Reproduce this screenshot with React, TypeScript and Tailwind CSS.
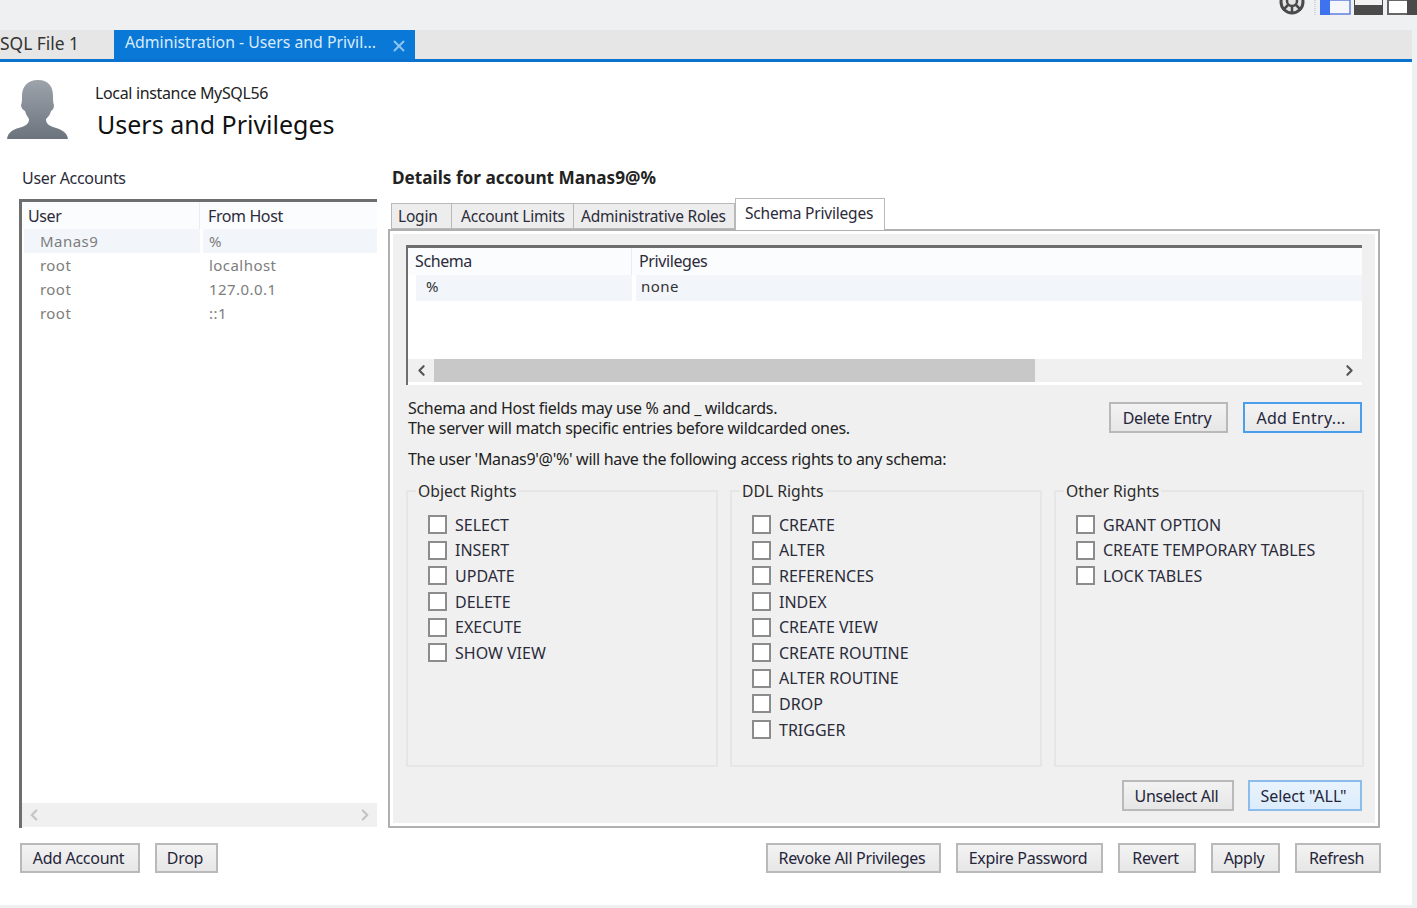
import { ChevronLeft, ChevronRight, X } from "lucide-react"

const objectRights = ["SELECT", "INSERT", "UPDATE", "DELETE", "EXECUTE", "SHOW VIEW"]
const ddlRights = ["CREATE", "ALTER", "REFERENCES", "INDEX", "CREATE VIEW", "CREATE ROUTINE", "ALTER ROUTINE", "DROP", "TRIGGER"]
const otherRights = ["GRANT OPTION", "CREATE TEMPORARY TABLES", "LOCK TABLES"]
const accounts = [
  ["Manas9", "%"],
  ["root", "localhost"],
  ["root", "127.0.0.1"],
  ["root", "::1"],
]

const btnTones = {
  plain: "border-[#b9b9b9] from-[#f3f3f3] to-[#e6e6e6] tracking-[-0.3px]",
  focus: "border-[#4a9fec] from-[#f3f3f3] to-[#e9e9e9] tracking-[0.3px]",
  hover: "border-[#8cbcec] from-[#e8f3fd] to-[#dcecfb]",
}

function Btn({ label, className = "", tone = "plain" }: { label: string; className?: string; tone?: keyof typeof btnTones }) {
  return (
    <button className={`shrink-0 border-2 bg-gradient-to-b pr-[3px] text-[16px] text-[#25253a] ${btnTones[tone]} ${className}`}>
      {label}
    </button>
  )
}

function RightsGroup({ title, items }: { title: string; items: string[] }) {
  return (
    <fieldset className="h-[286px] border-2 border-[#e6e6e6] pl-[20px]">
      <legend className="-ml-[12px] h-[20px] px-[2px] text-[15.7px] leading-[20px] text-[#2b2b2b]">{title}</legend>
      <div className="pt-[11px]">
        {items.map((item) => (
          <label key={item} className="flex h-[25.6px] items-center gap-[8px] text-[16px] text-[#2b2b3a]">
            <span className="h-[19px] w-[19px] shrink-0 border-2 border-[#8c8c8c] bg-white" />
            {item}
          </label>
        ))}
      </div>
    </fieldset>
  )
}

function TopIcons() {
  return (
    <svg width="140" height="16" viewBox="0 0 140 16" className="shrink-0">
      <circle cx="15" cy="2" r="11" fill="#e4e4e4" stroke="#4a4a4a" strokeWidth="3" />
      <circle cx="15" cy="1" r="5" fill="none" stroke="#4a4a4a" strokeWidth="2.5" />
      <path d="M6 10 L11 5 M24 10 L19 5 M15 7 V13" stroke="#4a4a4a" strokeWidth="2.5" />
      <path d="M38 0 V15" stroke="#b4bccb" strokeWidth="1" strokeDasharray="1 1" />
      <rect x="44" y="0" width="29" height="14" fill="#f4f6fb" stroke="#5f7fe0" strokeWidth="1.5" />
      <rect x="43" y="0" width="10" height="15" fill="#3f72ef" />
      <rect x="77" y="0" width="29" height="15" fill="#4a4a4a" />
      <rect x="78" y="0" width="27" height="5" fill="#f2f2f2" />
      <rect x="111" y="0" width="29" height="14" fill="#fff" stroke="#666" strokeWidth="2" />
      <rect x="130" y="0" width="10" height="15" fill="#4a4a4a" />
    </svg>
  )
}

function Avatar() {
  return (
    <svg width="62" height="62" viewBox="0 0 62 62" className="shrink-0">
      <defs>
        <linearGradient id="avatarFill" x1="0" y1="0" x2="0" y2="1">
          <stop offset="0" stopColor="#9da3ab" />
          <stop offset="1" stopColor="#6b737d" />
        </linearGradient>
      </defs>
      <path
        d="M31 1 C20 1 15 8 15 17 C15 21 15 24 14 26 C14 29 16 31 18 32 C19 36 21 38 22 40 C22 44 20 46 15 48 C8 50 1 52 0 60 L61 60 C60 52 52 50 46 48 C41 46 39 44 39 40 C41 38 43 36 44 32 C46 31 47 29 47 26 C46 24 46 21 46 17 C46 8 42 1 31 1 Z"
        fill="url(#avatarFill)"
      />
    </svg>
  )
}

export default function App() {
  return (
    <div className="flex h-[908px] w-[1417px] flex-col overflow-hidden bg-[#eff0f2] font-['Noto_Sans',sans-serif] text-[#222]">
      {/* Title strip */}
      <div className="flex h-[30px] shrink-0 justify-end">
        <TopIcons />
      </div>

      {/* Document tabs */}
      <div className="mr-[5px] flex h-[32px] shrink-0 border-b-[3px] border-[#0c72d0] bg-[#e6e6e6]">
        <div className="w-[114px] pt-[1px] text-[17.4px] leading-[24px] text-[#333]">SQL File 1</div>
        <div className="flex w-[301px] bg-[#0a78d7] pl-[11px] text-[15.8px] leading-[24px] text-[#d8ebfb]">
          <span className="w-[265px] whitespace-nowrap">Administration - Users and Privil...</span>
          <X size={18} strokeWidth={2.5} className="mt-[7px] text-[#8fc4ef]" />
        </div>
      </div>

      <div className="mb-[3px] mr-[5px] flex flex-1 flex-col bg-white">
        {/* Page header */}
        <div className="flex h-[105px] shrink-0 pl-[7px] pt-[17px]">
          <Avatar />
          <div className="ml-[26px] pt-[4px]">
            <div className="h-[20px] text-[16px] leading-[20px] tracking-[-0.35px] text-[#222]">Local instance MySQL56</div>
            <div className="ml-[2px] mt-[5px] text-[25px] leading-[32px] text-[#111]">Users and Privileges</div>
          </div>
        </div>

        <div className="grid shrink-0 grid-cols-[358px_992px] gap-x-[11px] pl-[19px]">
          <div className="h-[32px] pl-[3px] pt-[1px] text-[16px] leading-[20px] tracking-[-0.3px] text-[#2b2b3a]">User Accounts</div>
          <div className="h-[32px] pl-[4px] pt-[1px] text-[17.2px] font-bold leading-[20px] text-[#222]">Details for account Manas9@%</div>

          {/* Accounts list */}
          <div className="flex h-[629px] flex-col border-l-[3px] border-t-[3px] border-[#6e6e6e] bg-white">
            <div className="flex h-[27px] shrink-0 bg-[#fbfcfe] text-[16px] leading-[28px] tracking-[-0.4px] text-[#2b2b3a]">
              <div className="w-[178px] border-r border-[#e6edf5] pl-[6px]">User</div>
              <div className="pl-[8px]">From Host</div>
            </div>
            <div className="flex-1">
              {accounts.map(([user, host], i) => (
                <div key={host} className="ml-[2px] flex h-[24px] font-['DejaVu_Sans',sans-serif] text-[15px] leading-[24px] tracking-[0.45px] text-[#7d7d7d]">
                  <div className={`w-[176px] pl-[16px] ${i === 0 ? "bg-[#f2f6fb]" : ""}`}>{user}</div>
                  <div className={`ml-[3px] flex-1 pl-[6px] ${i === 0 ? "bg-[#f2f6fb]" : ""}`}>{host}</div>
                </div>
              ))}
            </div>
            <div className="mb-[1px] flex h-[24px] shrink-0 items-center justify-between bg-[#f0f0f0] px-[3px] text-[#c4c4c4]">
              <ChevronLeft size={18} strokeWidth={3} />
              <ChevronRight size={18} strokeWidth={3} />
            </div>
          </div>

          {/* Details */}
          <div className="flex h-[629px] flex-col">
            <div className="flex h-[30px] shrink-0 items-end pl-[3px] text-[15.5px] tracking-[-0.2px] text-[#2b2b3a]">
              <div className="h-[26px] w-[61px] border border-[#b9b9b9] bg-[#ededed] pl-[6px] leading-[25px]">Login</div>
              <div className="h-[26px] w-[122px] border border-l-0 border-[#b9b9b9] bg-[#ededed] pl-[9px] leading-[25px]">Account Limits</div>
              <div className="h-[26px] w-[161px] whitespace-nowrap border border-l-0 border-[#b9b9b9] bg-[#ededed] pl-[7px] leading-[25px]">Administrative Roles</div>
              <div className="relative z-10 -mb-[1px] h-[32px] w-[150px] border border-b-0 border-[#b9b9b9] bg-white pl-[9px] pt-[2px] leading-[24px]">Schema Privileges</div>
            </div>

            <div className="flex flex-1 flex-col border-2 border-[#b0b0b0] bg-[#f0f0f0] outline outline-[3px] -outline-offset-[5px] outline-white">
              <div className="mx-[16px] mt-[14px] flex h-[140px] shrink-0 flex-col border-l-2 border-t-[3px] border-[#6e6e6e] bg-white">
                <div className="flex h-[27px] shrink-0 bg-[#fbfcfe] text-[16px] leading-[26px] tracking-[-0.4px] text-[#2b2b3a]">
                  <div className="w-[224px] border-r border-[#e6edf5] pl-[7px]">Schema</div>
                  <div className="pl-[7px]">Privileges</div>
                </div>
                <div className="flex h-[26px] shrink-0 font-['DejaVu_Sans',sans-serif] text-[15px] leading-[23px] tracking-[0.45px] text-[#333]">
                  <div className="ml-[8px] w-[216px] bg-[#f2f6fb] pl-[10px]">%</div>
                  <div className="ml-[4px] flex-1 bg-[#f2f6fb] pl-[5px]">none</div>
                </div>
                <div className="flex-1" />
                <div className="mb-[3px] flex h-[23px] shrink-0 items-center bg-[#f0f0f0] text-[#555]">
                  <div className="flex w-[26px] justify-center">
                    <ChevronLeft size={17} strokeWidth={3} />
                  </div>
                  <div className="h-full w-[601px] bg-[#c8c8c8]" />
                  <div className="flex flex-1 justify-end pr-[4px]">
                    <ChevronRight size={17} strokeWidth={3} />
                  </div>
                </div>
              </div>

              <div className="mx-[18px] mt-[13px] flex h-[44px] shrink-0 justify-between">
                <div className="text-[16px] leading-[20px] tracking-[-0.3px] text-[#222]">
                  <div>Schema and Host fields may use % and _ wildcards.</div>
                  <div>The server will match specific entries before wildcarded ones.</div>
                </div>
                <div className="-mr-[2px] mt-[4px] flex h-[31px] gap-[15px]">
                  <Btn label="Delete Entry" className="w-[119px]" />
                  <Btn label="Add Entry..." tone="focus" className="w-[119px]" />
                </div>
              </div>

              <div className="ml-[18px] mt-[7px] h-[20px] shrink-0 text-[16px] leading-[20px] tracking-[-0.3px] text-[#222]">
                The user 'Manas9'@'%' will have the following access rights to any schema:
              </div>

              <div className="mx-[16px] mt-[12px] grid shrink-0 grid-cols-[312px_312px_310px] gap-x-[12px]">
                <RightsGroup title="Object Rights" items={objectRights} />
                <RightsGroup title="DDL Rights" items={ddlRights} />
                <RightsGroup title="Other Rights" items={otherRights} />
              </div>

              <div className="mr-[16px] mt-[13px] flex h-[31px] justify-end gap-[14px]">
                <Btn label="Unselect All" className="w-[112px]" />
                <Btn label='Select "ALL"' tone="hover" className="w-[114px]" />
              </div>
            </div>
          </div>
        </div>

        {/* Bottom actions */}
        <div className="mt-[15px] flex h-[30px] shrink-0 pl-[20px]">
          <Btn label="Add Account" className="w-[120px]" />
          <Btn label="Drop" className="ml-[15px] w-[63px]" />
          <div className="ml-[548px] flex gap-[15px]">
            <Btn label="Revoke All Privileges" className="w-[175px]" />
            <Btn label="Expire Password" className="w-[147px]" />
            <Btn label="Revert" className="w-[78px]" />
            <Btn label="Apply" className="w-[69px]" />
            <Btn label="Refresh" className="w-[86px]" />
          </div>
        </div>
      </div>
    </div>
  )
}
